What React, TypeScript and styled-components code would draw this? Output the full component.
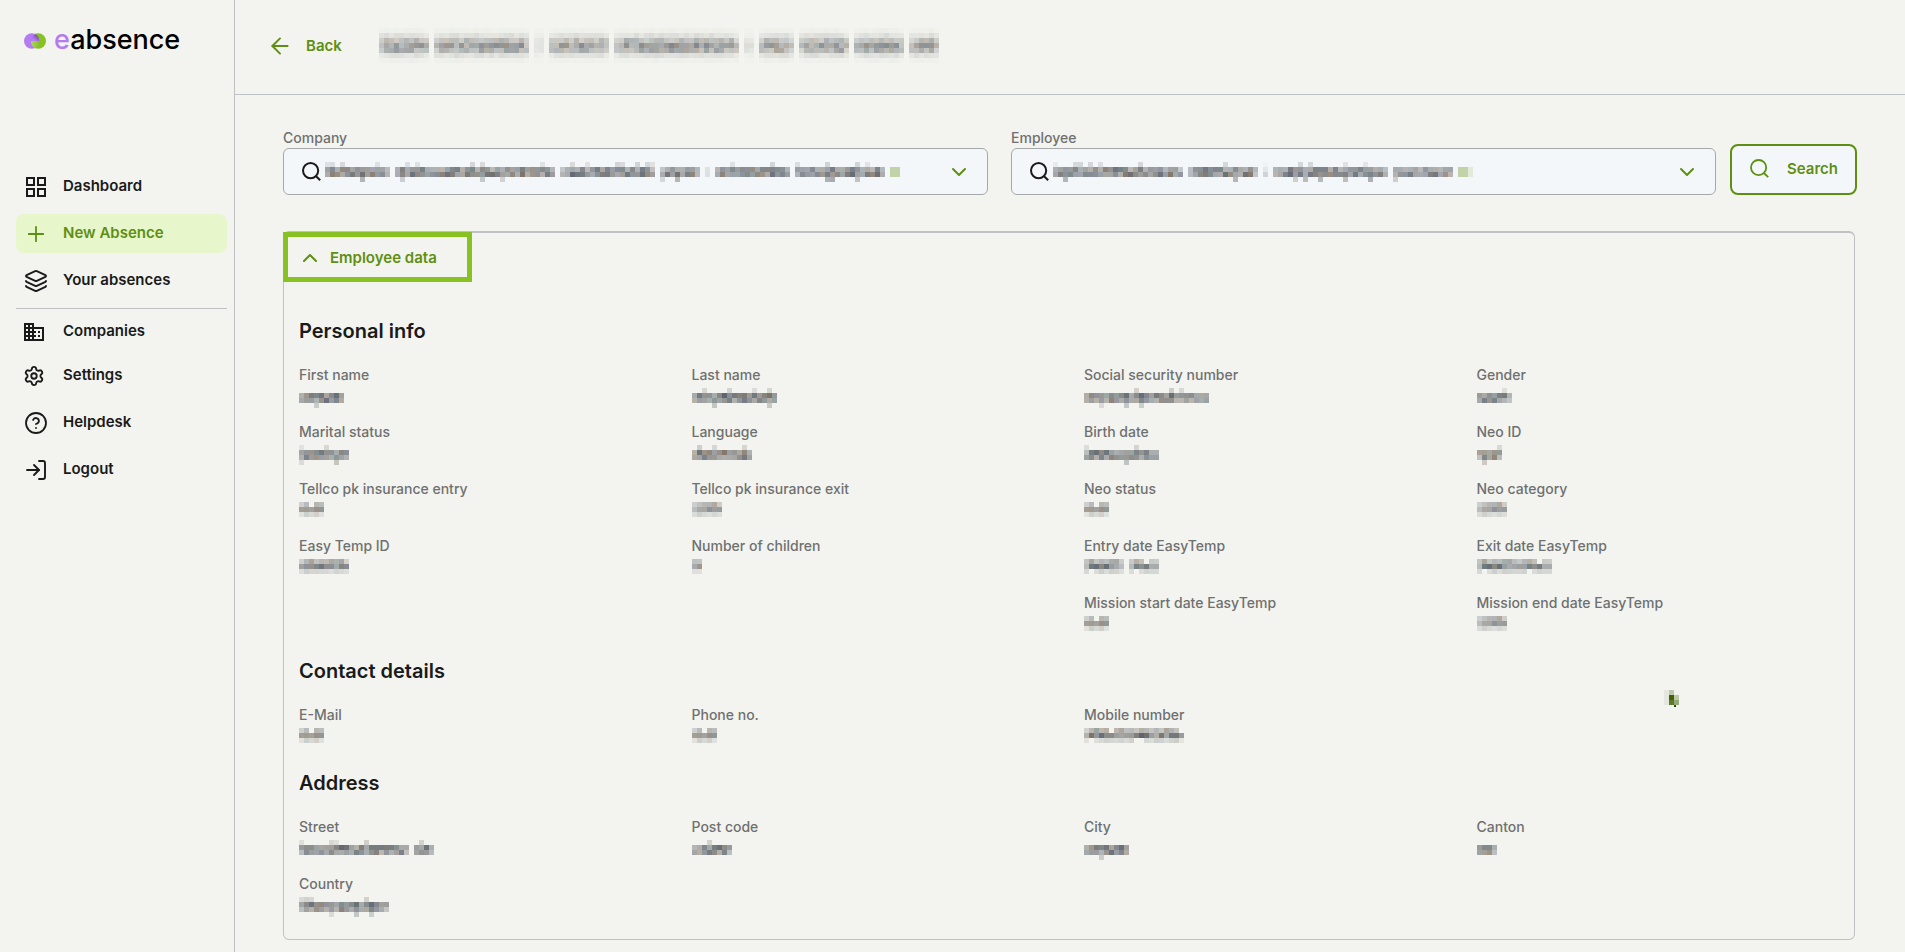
import React, { useState } from 'react';
import styled, { createGlobalStyle, css } from 'styled-components';
import { ArrowLeft, ChevronDown, ChevronUp, CircleQuestionMark, Layers, LogIn, Settings } from 'lucide-react';
import { MdDomain } from 'react-icons/md';

const color = {
  page: '#f3f4ef',
  ink: '#1a1a1a',
  muted: '#6f7070',
  line: '#c0c1c5',
  fieldLine: '#a6a8aa',
  field: '#f4f7fa',
  green: '#5f8f12',
  brand: '#87c122',
  active: '#e8f6cc',
  purple: '#b57bf0',
};

const GlobalStyle = createGlobalStyle`
  *, *::before, *::after { box-sizing: border-box; }
  body {
    margin: 0;
    background: ${color.page};
    color: ${color.ink};
    font-family: Inter, "Liberation Sans", sans-serif;
    font-size: 15px;
    line-height: 20px;
  }
  button, select { font: inherit; color: inherit; }
`;

const Shell = styled.div`
  display: grid;
  grid-template-columns: 235px minmax(0, 1fr);
  min-height: 100vh;
`;

/* ---------- sidebar ---------- */

const Sidebar = styled.aside`
  border-right: 1px solid ${color.line};
  padding: 24px 7px 24px 16px;
`;

const Logo = styled.a`
  display: flex;
  align-items: center;
  gap: 8px;
  height: 32px;
  padding-left: 8px;
  margin-bottom: 111px;
  color: #000;
  font-size: 27px;
  font-weight: 500;
  line-height: 32px;
  text-decoration: none;
`;

const LogoMark = styled.svg`
  margin-top: 2px;
`;

const LogoAccent = styled.span`
  color: ${color.purple};
`;

const NavList = styled.ul<{ $divided?: boolean }>`
  display: flex;
  flex-direction: column;
  gap: 8px;
  margin: 0;
  padding: 0;
  list-style: none;
  ${(p) =>
    p.$divided &&
    css`
      margin-top: 8px;
      padding-top: 6px;
      border-top: 1px solid ${color.line};
    `}
`;

const NavLink = styled.a<{ $active?: boolean; $compact?: boolean }>`
  display: flex;
  align-items: center;
  gap: 15px;
  height: ${(p) => (p.$compact ? '33px' : '39px')};
  padding-left: 8px;
  border-radius: 8px;
  font-weight: 600;
  color: ${(p) => (p.$active ? color.green : color.ink)};
  background: ${(p) => (p.$active ? color.active : 'transparent')};
  text-decoration: none;
`;

const NavIcon = styled.span<{ $shift?: boolean }>`
  display: flex;
  align-items: center;
  justify-content: center;
  width: 24px;
  margin-left: ${(p) => (p.$shift ? '-2px' : '0')};
  margin-right: ${(p) => (p.$shift ? '2px' : '0')};
`;

const NavText = styled.span`
  padding-bottom: 2px;
`;

/* ---------- header ---------- */

const Main = styled.main`
  min-width: 0;
`;

const Header = styled.header`
  display: flex;
  align-items: center;
  gap: 37px;
  height: 95px;
  padding: 0 48px 3px 32px;
  border-bottom: 1px solid ${color.line};
`;

const BackLink = styled.a`
  display: flex;
  align-items: center;
  gap: 13px;
  color: ${color.green};
  font-weight: 600;
  text-decoration: none;
`;

const Title = styled.h1`
  display: flex;
  margin: 0;
`;

/* ---------- search bar ---------- */

const Content = styled.div`
  padding: 33px 48px 12px;
`;

const SearchForm = styled.form`
  display: flex;
  align-items: end;
  gap: 14px;
  margin-bottom: 36px;
`;

const Pickers = styled.div`
  display: grid;
  flex: 1;
  grid-template-columns: repeat(2, minmax(0, 1fr));
  gap: 23px;
`;

const FieldLabel = styled.label`
  display: block;
  color: ${color.muted};
  font-size: 14px;
  font-weight: 500;
`;

const SelectBox = styled.div`
  display: grid;
  grid-template-columns: 41px minmax(0, 1fr) 40px;
  align-items: center;
  height: 47px;
  border: 1px solid ${color.fieldLine};
  border-radius: 6px;
  background: ${color.field};
  & > svg {
    pointer-events: none;
    grid-row: 1;
  }
`;

const NativeSelect = styled.select`
  grid-row: 1;
  grid-column: 1 / -1;
  width: 100%;
  height: 45px;
  border: 0;
  border-radius: 6px;
  background: transparent;
  appearance: none;
`;

const LensSlot = styled.svg`
  grid-column: 1;
  margin-left: 18px;
`;

const ChevronSlot = styled(ChevronDown)`
  grid-column: 3;
  color: ${color.green};
`;

const SearchButton = styled.button`
  display: flex;
  align-items: center;
  gap: 18px;
  width: 127px;
  height: 51px;
  padding: 0 0 2px 18px;
  border: 2px solid ${color.green};
  border-radius: 8px;
  background: ${color.field};
  color: ${color.green};
  font-weight: 600;
`;

/* ---------- employee panel ---------- */

const Panel = styled.section`
  position: relative;
  margin-right: 2px;
  padding-bottom: 8px;
  border: 1px solid ${color.line};
  border-top-width: 2px;
  border-radius: 6px;
`;

const PanelToggle = styled.button`
  display: flex;
  align-items: center;
  gap: 8px;
  width: 189px;
  height: 50px;
  margin: -1px 0 37px -1px;
  padding: 2px 0 0 10px;
  border: 5px solid ${color.brand};
  background: transparent;
  color: ${color.green};
  font-weight: 600;
`;

const SectionTitle = styled.h2`
  margin: 0 0 22px 15px;
  font-size: 20px;
  font-weight: 600;
  line-height: 24px;
`;

const Facts = styled.dl`
  display: grid;
  grid-template-columns: repeat(4, minmax(0, 1fr));
  margin: 0 0 9px;
  &:last-of-type {
    margin-bottom: 0;
  }
`;

const Fact = styled.div<{ $column?: number }>`
  height: 57px;
  padding-left: 15px;
  grid-column: ${(p) => p.$column ?? 'auto'};
`;

const FactLabel = styled.dt`
  color: ${color.muted};
  font-size: 14px;
  font-weight: 500;
`;

const FactValue = styled.dd`
  display: flex;
  margin: 3px 0 0;
`;

const PointerPatch = styled.svg`
  position: absolute;
  top: 457px;
  right: 175px;
`;

/* ---------- redacted values ---------- */

type Variant = 'value' | 'tall' | 'field' | 'title';

const CELL = 5;

// Darkness of each row of cells, and the share of cells that are filled in it.
const rowsOf: Record<Variant, [number, number][]> = {
  value: [[0.16, 0.16], [0.54, 1], [0.48, 1], [0.2, 0.06]],
  tall: [[0.34, 0.9], [0.56, 1], [0.16, 0.85]],
  field: [[0.14, 0.22], [0.48, 1], [0.54, 1], [0.3, 0.08]],
  title: [[0.02, 1], [0.1, 1], [0.28, 1], [0.42, 1], [0.34, 1], [0.1, 1], [0.02, 1]],
};

const tints = ['120,116,112', '104,112,120', '112,112,112', '128,116,104', '100,112,116', '96,100,112'];

function noise(seed: number) {
  const v = Math.sin(seed * 127.1 + 11.7) * 43758.5453;
  return v - Math.floor(v);
}

interface RedactedProps {
  /** Lengths in cells: word, gap, word, gap, … */
  runs: number[];
  variant?: Variant;
  flag?: number;
  className?: string;
}

function Redacted({ runs, variant = 'value', flag = 0, className }: RedactedProps) {
  const rows = rowsOf[variant];
  const total = runs.reduce((a, b) => a + b, 0);
  const cells: React.ReactNode[] = [];
  let x = 0;
  runs.forEach((length, i) => {
    if (i % 2 === 0) {
      for (let c = 0; c < length; c += 1) {
        rows.forEach(([dark, share], r) => {
          const seed = (x + c) * 7 + r * 31 + total * 3;
          if (noise(seed) > share) return;
          const faint = runs.length > 5 && length <= 2 ? 0.35 : 1;
          const edge = c === 0 || c === length - 1 ? 0.7 : 1;
          const alpha = Math.min(1, dark * 1.5 * faint * edge * (0.65 + noise(seed + 5) * 0.6));
          cells.push(
            <rect
              key={`${x + c}-${r}`}
              x={(x + c) * CELL}
              y={r * CELL}
              width={CELL}
              height={CELL}
              fill={`rgba(${tints[Math.floor(noise(seed + 9) * tints.length)]},${alpha.toFixed(2)})`}
            />,
          );
        });
      }
    }
    x += length;
  });
  for (let c = 0; c < flag; c += 1) {
    cells.push(
      <rect key={`flag-${c}`} x={(x + 1 + c) * CELL} y={CELL} width={CELL} height={CELL * 2} fill={c === 2 ? '#e2ead8' : '#c2d3aa'} />,
    );
  }
  const width = (total + (flag ? flag + 1 : 0)) * CELL;
  return (
    <svg className={className} width={width} height={rows.length * CELL} shapeRendering="crispEdges" role="img" aria-label="Redacted">
      {cells}
    </svg>
  );
}

const FieldRedacted = styled(Redacted)`
  grid-column: 2;
`;

/* ---------- icons ---------- */

const DashboardIcon = () => (
  <svg width="20" height="20" viewBox="0 0 20 20" fill="none" stroke="currentColor" strokeWidth="2" aria-hidden>
    <rect x="1" y="1" width="7" height="7" />
    <rect x="12" y="1" width="7" height="7" />
    <rect x="1" y="12" width="7" height="7" />
    <rect x="12" y="12" width="7" height="7" />
  </svg>
);

const PlusIcon = () => (
  <svg width="24" height="24" viewBox="0 0 24 24" fill="none" stroke="currentColor" strokeWidth="1.8" strokeLinecap="round" aria-hidden>
    <path d="M12 4.8v14.4M4.8 12h14.4" />
  </svg>
);

const lensPaths = (
  <>
    <circle cx="8.6" cy="8.6" r="7.6" />
    <path d="M13.8 14l4.4 4.2" />
  </>
);

/* ---------- data ---------- */

interface FactData {
  label: string;
  runs: number[];
  variant?: Variant;
  column?: number;
}

const personal: FactData[] = [
  { label: 'First name', runs: [9] },
  { label: 'Last name', runs: [17] },
  { label: 'Social security number', runs: [25] },
  { label: 'Gender', runs: [7] },
  { label: 'Marital status', runs: [10] },
  { label: 'Language', runs: [12] },
  { label: 'Birth date', runs: [15] },
  { label: 'Neo ID', runs: [5] },
  { label: 'Tellco pk insurance entry', runs: [5], variant: 'tall' },
  { label: 'Tellco pk insurance exit', runs: [6], variant: 'tall' },
  { label: 'Neo status', runs: [5], variant: 'tall' },
  { label: 'Neo category', runs: [6], variant: 'tall' },
  { label: 'Easy Temp ID', runs: [10], variant: 'tall' },
  { label: 'Number of children', runs: [2], variant: 'tall' },
  { label: 'Entry date EasyTemp', runs: [8, 1, 6], variant: 'tall' },
  { label: 'Exit date EasyTemp', runs: [15], variant: 'tall' },
  { label: 'Mission start date EasyTemp', runs: [5], variant: 'tall', column: 3 },
  { label: 'Mission end date EasyTemp', runs: [6], variant: 'tall', column: 4 },
];

const contact: FactData[] = [
  { label: 'E-Mail', runs: [5], variant: 'tall' },
  { label: 'Phone no.', runs: [5], variant: 'tall' },
  { label: 'Mobile number', runs: [20], variant: 'tall' },
];

const address: FactData[] = [
  { label: 'Street', runs: [22, 1, 4] },
  { label: 'Post code', runs: [8] },
  { label: 'City', runs: [9] },
  { label: 'Canton', runs: [4] },
  { label: 'Country', runs: [18] },
];

const groups = [
  { title: 'Personal info', facts: personal },
  { title: 'Contact details', facts: contact },
  { title: 'Address', facts: address },
];

interface NavItemProps {
  icon: React.ReactNode;
  label: string;
  active?: boolean;
  compact?: boolean;
  shift?: boolean;
}

function NavItem({ icon, label, active, compact, shift }: NavItemProps) {
  return (
    <li>
      <NavLink href="#" $active={active} $compact={compact} aria-current={active ? 'page' : undefined}>
        <NavIcon $shift={shift}>{icon}</NavIcon>
        <NavText>{label}</NavText>
      </NavLink>
    </li>
  );
}

interface PickerProps {
  id: string;
  label: string;
  runs: number[];
  flag: number;
}

function Picker({ id, label, runs, flag }: PickerProps) {
  return (
    <div>
      <FieldLabel htmlFor={id}>{label}</FieldLabel>
      <SelectBox>
        <NativeSelect id={id} />
        <LensSlot width="19" height="19" viewBox="0 0 19 19" fill="none" stroke={color.ink} strokeWidth="2" aria-hidden>
          {lensPaths}
        </LensSlot>
        <FieldRedacted runs={runs} flag={flag} variant="field" />
        <ChevronSlot size={24} strokeWidth={2} aria-hidden />
      </SelectBox>
    </div>
  );
}

export default function App() {
  const [open, setOpen] = useState(true);
  return (
    <>
      <GlobalStyle />
      <Shell>
        <Sidebar>
          <Logo href="#">
            <LogoMark width="22" height="16" viewBox="0 0 22 16" aria-hidden>
              <defs>
                <linearGradient id="fold" x1="0" y1="1" x2="1" y2="0">
                  <stop offset="0.3" stopColor="#b57bf0" />
                  <stop offset="1" stopColor="#5d3f86" />
                </linearGradient>
                <linearGradient id="leaf" x1="0" y1="0" x2="1" y2="0">
                  <stop offset="0" stopColor="#a9d85c" />
                  <stop offset="1" stopColor="#87c122" />
                </linearGradient>
              </defs>
              <circle cx="14.2" cy="8" r="7.8" fill="#87c122" />
              <circle cx="7.8" cy="8" r="7.8" fill="#b57bf0" />
              <path d="M7 8A7.4 7.4 0 0 1 11.5 1.2A7.8 7.8 0 0 1 15.2 8Z" fill="url(#fold)" />
              <path d="M7 8h8.6a7.8 7.8 0 0 1-4.6 7.2A7.8 7.8 0 0 1 7 8Z" fill="url(#leaf)" />
            </LogoMark>
            <span>
              <LogoAccent>e</LogoAccent>absence
            </span>
          </Logo>
          <nav aria-label="Main">
            <NavList>
              <NavItem label="Dashboard" icon={<DashboardIcon />} />
              <NavItem label="New Absence" icon={<PlusIcon />} active />
              <NavItem label="Your absences" icon={<Layers size={24} strokeWidth={1.9} />} />
            </NavList>
            <NavList $divided>
              <NavItem label="Companies" icon={<MdDomain size={24} />} compact shift />
              <NavItem label="Settings" icon={<Settings size={22} strokeWidth={2} />} shift />
              <NavItem label="Helpdesk" icon={<CircleQuestionMark size={24} strokeWidth={1.8} />} />
              <NavItem label="Logout" icon={<LogIn size={24} strokeWidth={1.9} />} />
            </NavList>
          </nav>
        </Sidebar>
        <Main>
          <Header>
            <BackLink href="#">
              <ArrowLeft size={26} strokeWidth={1.8} aria-hidden />
              Back
            </BackLink>
            <Title>
              <Redacted variant="title" runs={[10, 1, 19, 1, 2, 1, 12, 1, 25, 1, 2, 1, 7, 1, 10, 1, 10, 1, 6]} />
            </Title>
          </Header>
          <Content>
            <SearchForm onSubmit={(e) => e.preventDefault()}>
              <Pickers>
                <Picker id="company" label="Company" runs={[13, 1, 32, 1, 19, 1, 8, 1, 1, 1, 15, 1, 18]} flag={2} />
                <Picker id="employee" label="Employee" runs={[26, 1, 14, 1, 1, 1, 23, 1, 12]} flag={3} />
              </Pickers>
              <SearchButton type="submit">
                <svg width="19" height="19" viewBox="0 0 19 19" fill="none" stroke="currentColor" strokeWidth="1.8" aria-hidden>
                  {lensPaths}
                </svg>
                Search
              </SearchButton>
            </SearchForm>
            <Panel>
              <PanelToggle type="button" aria-expanded={open} onClick={() => setOpen(!open)}>
                <ChevronUp size={24} strokeWidth={2} aria-hidden />
                Employee data
              </PanelToggle>
              {open &&
                groups.map((group) => (
                  <React.Fragment key={group.title}>
                    <SectionTitle>{group.title}</SectionTitle>
                    <Facts>
                      {group.facts.map((fact) => (
                        <Fact key={fact.label} $column={fact.column}>
                          <FactLabel>{fact.label}</FactLabel>
                          <FactValue>
                            <Redacted runs={fact.runs} variant={fact.variant} />
                          </FactValue>
                        </Fact>
                      ))}
                    </Facts>
                  </React.Fragment>
                ))}
              <PointerPatch width="15" height="18" shapeRendering="crispEdges" aria-hidden>
                <path fill="#e4e6e0" d="M0 0h5v15H0z" />
                <path fill="#bcc8aa" d="M5 0h5v5H5zM10 5h5v5h-5z" />
                <path fill="#456008" d="M5 5h5v5H5z" />
                <path fill="#5d7a2a" d="M5 10h5v5H5z" />
                <path fill="#93a878" d="M10 10h5v5h-5z" />
                <path fill="#2f3d10" d="M10 15h2v2h-2z" />
              </PointerPatch>
            </Panel>
          </Content>
        </Main>
      </Shell>
    </>
  );
}
